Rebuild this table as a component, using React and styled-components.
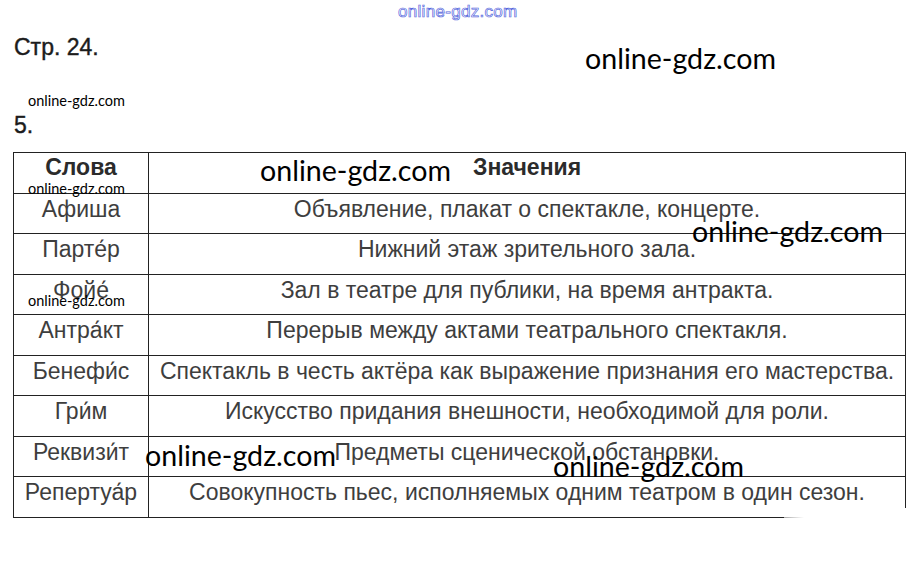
import React from 'react';
import styled, { createGlobalStyle } from 'styled-components';

const GlobalStyle = createGlobalStyle`
  html, body {
    margin: 0;
    padding: 0;
    background: #ffffff;
  }
  body {
    font-family: "Liberation Sans", Arial, sans-serif;
  }
`;

const Page = styled.div`
  position: relative;
  width: 917px;
  height: 562px;
  overflow: hidden;
  background: #fff;
  padding-top: 3px;
  box-sizing: border-box;
`;

const TopMark = styled.div`
  margin-left: 398px;
  font-family: "Liberation Sans", Arial, sans-serif;
  font-size: 17px;
  line-height: 17px;
  color: transparent;
  -webkit-text-stroke: 0.7px #5566dd;
  letter-spacing: 0.3px;
`;

const Heading = styled.div`
  margin: ${({ $top }) => $top}px 0 0 14px;
  font-size: 23px;
  line-height: 24px;
  color: #1c1c1c;
  -webkit-text-stroke: 0.4px #1c1c1c;
`;

const Table = styled.div`
  margin: 15px 0 0 13px;
  width: 893px;
  border: 1px solid #222;
  border-top: none;
  box-sizing: border-box;
`;

const Row = styled.div`
  display: grid;
  grid-template-columns: 135px 1fr;
  height: 40.5px;
  box-sizing: border-box;
  border-top: 1px solid #222;
`;

const WordCell = styled.div`
  border-right: 1px solid #222;
  text-align: center;
  padding-top: ${({ $head }) => ($head ? 2 : 3)}px;
  font-size: 23px;
  line-height: 24px;
  font-weight: ${({ $head }) => ($head ? 700 : 400)};
  color: ${({ $head }) => ($head ? '#2b2b2b' : '#3e3e3e')};
  white-space: nowrap;
`;

const MeaningCell = styled.div`
  text-align: ${({ $head }) => ($head ? 'left' : 'center')};
  padding: ${({ $head }) => ($head ? '2px 0 0 324px' : '3px 0 0 0')};
  font-size: 23px;
  line-height: 24px;
  font-weight: ${({ $head }) => ($head ? 700 : 400)};
  color: ${({ $head }) => ($head ? '#2b2b2b' : '#3e3e3e')};
  white-space: nowrap;
`;

const Watermark = styled.div`
  position: absolute;
  left: ${({ $x }) => $x}px;
  top: ${({ $y }) => $y}px;
  font-family: Lato, "Open Sans", sans-serif;
  font-size: ${({ $small }) => ($small ? 14.5 : 28.6)}px;
  line-height: 1;
  color: #000;
  white-space: nowrap;
`;

const ScanGap = styled.div`
  position: absolute;
  left: 784px;
  top: 508px;
  width: 133px;
  height: 12px;
  background: linear-gradient(to right, rgba(255, 255, 255, 0.6), #fff 20px);
`;

const rows = [
  ['Афиша', 'Объявление, плакат о спектакле, концерте.'],
  ['Парте\u0301р', 'Нижний этаж зрительного зала.'],
  ['Фойе\u0301', 'Зал в театре для публики, на время антракта.'],
  ['Антра\u0301кт', 'Перерыв между актами театрального спектакля.'],
  ['Бенефи\u0301с', 'Спектакль в честь актёра как выражение признания его мастерства.'],
  ['Гри\u0301м', 'Искусство придания внешности, необходимой для роли.'],
  ['Реквизи\u0301т', 'Предметы сценической обстановки.'],
  ['Репертуа\u0301р', 'Совокупность пьес, исполняемых одним театром в один сезон.'],
];

const marks = [
  { x: 585, y: 44 },
  { x: 28, y: 94, small: true },
  { x: 260, y: 156 },
  { x: 28, y: 182, small: true },
  { x: 692, y: 217 },
  { x: 28, y: 294, small: true },
  { x: 145, y: 441 },
  { x: 553, y: 452 },
];

export default function App() {
  return (
    <>
      <GlobalStyle />
      <Page>
        <TopMark>online-gdz.com</TopMark>
        <Heading $top={15}>Стр. 24.</Heading>
        <Heading $top={54}>5.</Heading>
        <Table>
          <Row>
            <WordCell $head>Слова</WordCell>
            <MeaningCell $head>Значения</MeaningCell>
          </Row>
          {rows.map(([word, meaning]) => (
            <Row key={word}>
              <WordCell>{word}</WordCell>
              <MeaningCell>{meaning}</MeaningCell>
            </Row>
          ))}
        </Table>
        <ScanGap />
        {marks.map((m, i) => (
          <Watermark key={i} $x={m.x} $y={m.y} $small={m.small}>
            online-gdz.com
          </Watermark>
        ))}
      </Page>
    </>
  );
}
